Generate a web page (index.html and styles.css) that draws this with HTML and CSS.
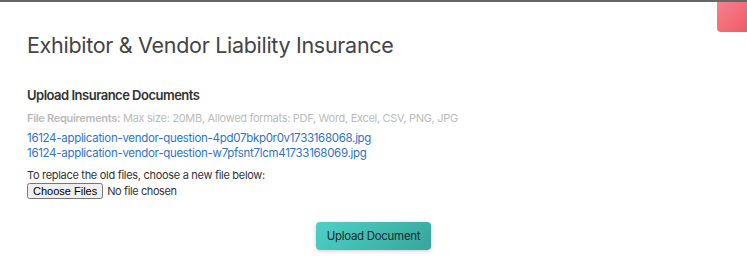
FILE: index.html
```html
<!doctype html>
<html>
    <head>
        <meta charset="utf-8">
        <title>Exhibitor &amp; Vendor Liability Insurance</title>
        <link rel="stylesheet" href="styles.css">
    </head>
    <body>
        <div class="modal">
            <div class="close-tab"></div>
            <h1 class="modal-title">Exhibitor &amp; Vendor Liability Insurance</h1>
            <div class="upload-section">
                <h2 class="section-title">Upload Insurance Documents</h2>
                <p class="requirements"><b>File Requirements:</b> Max size: 20MB, Allowed formats: PDF, Word, Excel, CSV, PNG, JPG</p>
                <div class="file-list">
                    <a href="#">16124-application-vendor-question-4pd07bkp0r0v1733168068.jpg</a>
                    <a href="#">16124-application-vendor-question-w7pfsnt7lcm41733168069.jpg</a>
                </div>
                <p class="replace-note">To replace the old files, choose a new file below:</p>
                <input type="file" class="file-input" multiple>
            </div>
            <div class="actions">
                <button class="upload-btn">Upload Document</button>
            </div>
        </div>
    </body>
</html>
```

FILE: styles.css
```css
body {
    margin: 0;
    background: #fff;
    font-family: "Inter", "Noto Sans", sans-serif;
}
.modal {
    position: relative;
    border-top: 2px solid #666;
    height: 274px;
    padding: 0 27px;
}
.close-tab {
    position: absolute;
    top: 0;
    right: 0;
    width: 30px;
    height: 30px;
    border-bottom-left-radius: 4px;
    background: linear-gradient(135deg, #f5818b, #f25a68);
}
.modal-title {
    margin: 0;
    padding-top: 30px;
    font-size: 21.5px;
    font-weight: 400;
    color: #444;
    letter-spacing: -0.3px;
}
.upload-section {
    margin-top: 29px;
}
.section-title {
    margin: 0;
    font-size: 13px;
    font-weight: 600;
    color: #333;
    letter-spacing: -0.5px;
}
.requirements {
    margin: 8px 0 0;
    font-size: 11px;
    color: #bbb;
    letter-spacing: -0.3px;
}
.requirements b { font-weight: 600; }
.file-list {
    margin-top: 6px;
    display: flex;
    flex-direction: column;
}
.file-list a {
    font-size: 11.5px;
    line-height: 15px;
    color: #2f74c4;
    text-decoration: none;
    letter-spacing: -0.3px;
}
.replace-note {
    margin: 7px 0 0;
    font-size: 11px;
    color: #333;
    line-height: 14px;
    letter-spacing: -0.3px;
}
.file-input {
    display: block;
    margin: 1px 0 0;
    font-family: inherit;
    font-size: 11px;
    color: #333;
    letter-spacing: -0.4px;
}
.file-input::file-selector-button {
    font-family: "Liberation Sans", Arial, sans-serif;
    font-size: 11px;
    letter-spacing: 0;
    padding: 0 4px;
    margin-right: 4px;
}
.actions {
    display: flex;
    justify-content: center;
    margin-top: 23px;
}
.upload-btn {
    border: 0;
    border-radius: 4px;
    padding: 7px 11px;
    font-family: inherit;
    font-size: 11.5px;
    letter-spacing: -0.3px;
    color: #1c2b2b;
    background: linear-gradient(135deg, #4ed0c6, #37a59c);
    box-shadow: 0 1px 4px rgba(0, 0, 0, 0.2);
}
```
